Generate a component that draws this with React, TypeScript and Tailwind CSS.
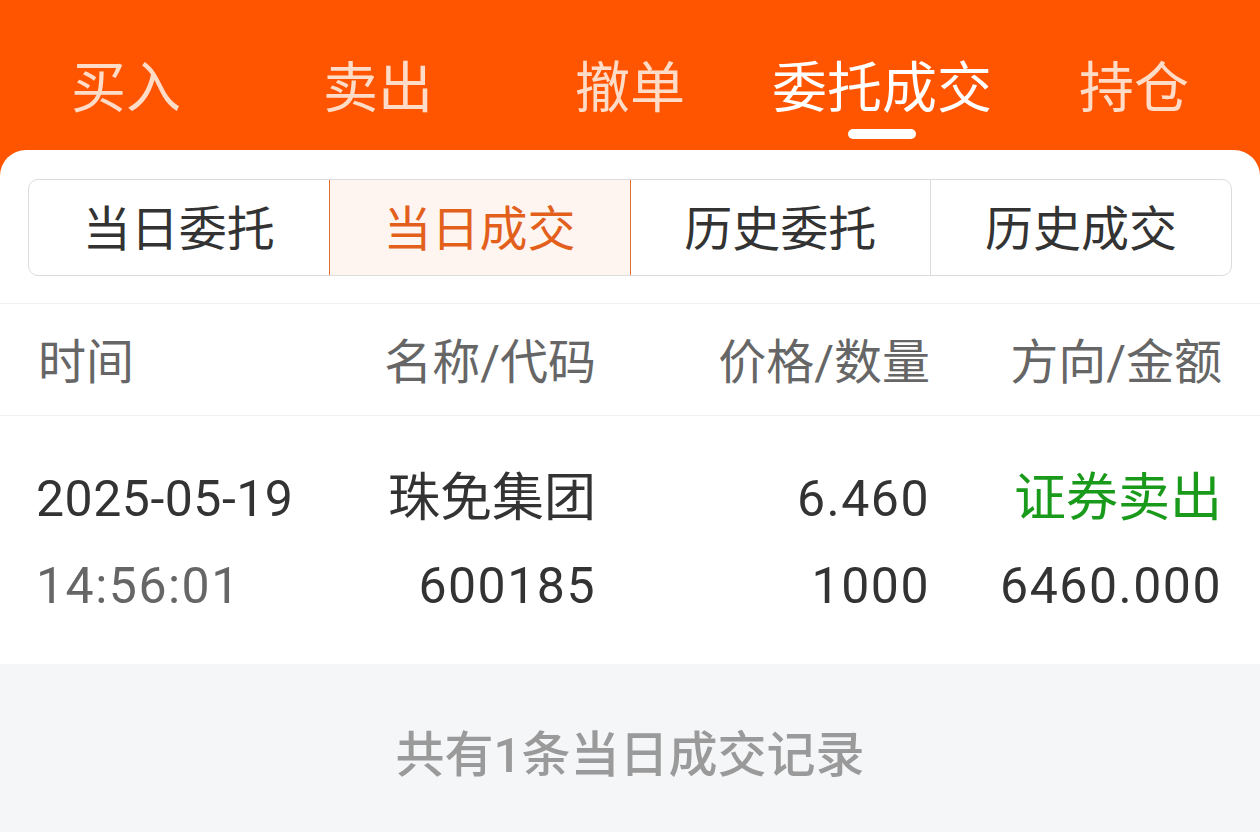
const font = { fontFamily: 'Roboto, "Noto Sans CJK SC", sans-serif' }

const mainTabs = ["买入", "卖出", "撤单", "委托成交", "持仓"]
const subTabs = ["当日委托", "当日成交", "历史委托", "历史成交"]

export default function App() {
  const activeMain = 3
  const activeSub = 1

  return (
    <div className="w-[1260px] h-[832px] bg-[#ff5500] flex flex-col overflow-hidden" style={font}>
      {/* top tabs */}
      <div className="h-[150px] grid grid-cols-5 shrink-0">
        {mainTabs.map((t, i) => (
          <div key={t} className="flex flex-col items-center pt-[57px]">
            <span
              className={
                "text-[55px] leading-[62px] " +
                (i === activeMain ? "text-white" : "text-[#ffdcc8]")
              }
            >
              {t}
            </span>
            {i === activeMain ? (
              <div className="mt-[10px] w-[68px] h-[10px] rounded-full bg-white" />
            ) : null}
          </div>
        ))}
      </div>

      {/* panel */}
      <div className="flex-1 bg-white rounded-t-[26px] flex flex-col">
        <div className="px-[28px] pt-[29px]">
          <div className="h-[97px] flex border border-[#dcdcdc] rounded-[10px] overflow-hidden">
            {subTabs.map((t, i) => (
              <div
                key={t}
                className={
                  "flex-1 flex items-center justify-center pt-[5px] text-[48px] " +
                  (i === activeSub
                    ? "bg-[#fff5f0] border border-[#e0702f] text-[#e2601c] -my-px"
                    : "text-[#333333]") +
                  (i === 3 ? " border-l border-[#dcdcdc]" : "")
                }
              >
                {t}
              </div>
            ))}
          </div>
        </div>

        {/* table header */}
        <div className="mt-[27px] border-t border-[#f0f0f0] border-b h-[113px] pt-[6px] px-[38px] grid grid-cols-[250px_308px_334px_292px] items-center text-[48px] text-[#666666]">
          <div>时间</div>
          <div className="text-right">名称/代码</div>
          <div className="text-right">价格/数量</div>
          <div className="text-right">方向/金额</div>
        </div>

        {/* data row */}
        <div className="h-[248px] px-[38px] pt-[54px] grid grid-cols-[250px_308px_334px_292px] text-[50px] tracking-[1.5px] leading-[58px] text-[#333333] whitespace-nowrap">
          <div className="flex flex-col gap-[29px] -ml-[2px]">
            <span className="tracking-[0.5px]">2025-05-19</span>
            <span className="text-[#666666]">14:56:01</span>
          </div>
          <div className="flex flex-col gap-[29px] text-right">
            <span className="text-[52px] tracking-normal">珠免集团</span>
            <span>600185</span>
          </div>
          <div className="flex flex-col gap-[29px] text-right">
            <span>6.460</span>
            <span>1000</span>
          </div>
          <div className="flex flex-col gap-[29px] text-right">
            <span className="text-[52px] tracking-normal text-[#1a9a1a]">证券卖出</span>
            <span>6460.000</span>
          </div>
        </div>

        {/* footer */}
        <div className="flex-1 bg-[#f5f6f8] flex items-center justify-center pt-[16px]">
          <span className="text-[49px] font-medium text-[#9a9a9a]">共有1条当日成交记录</span>
        </div>
      </div>
    </div>
  )
}
